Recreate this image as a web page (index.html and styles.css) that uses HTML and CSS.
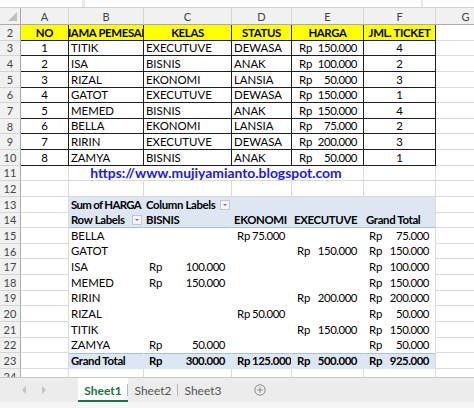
FILE: index.html
```html
<!DOCTYPE html>
<html>
<head>
<meta charset="utf-8">
<link rel="stylesheet" href="styles.css">
</head>
<body>
<div class="topbar"><div class="box b1"></div><div class="box b2"></div><div class="box b3"></div></div>
<div class="sheet">
  <div class="row colhdr">
    <div class="hc corner"><svg width="9" height="9" viewBox="0 0 9 9"><polygon points="9,0 9,9 0,9" fill="#bfbfbf"/></svg></div>
    <div class="hc">A</div><div class="hc">B</div><div class="hc">C</div><div class="hc">D</div><div class="hc">E</div><div class="hc">F</div><div class="hc">G</div>
  </div>
  <div class="row">
    <div class="rh">2</div>
    <div class="c t hd">NO</div><div class="c t hd"><span>NAMA PEMESAN</span></div><div class="c t hd">KELAS</div><div class="c t hd">STATUS</div><div class="c t hd">HARGA</div><div class="c t hd">JML. TICKET</div><div class="c"></div>
  </div>
  <div class="row">
    <div class="rh">3</div>
    <div class="c t ct">1</div><div class="c t">TITIK</div><div class="c t">EXECUTUVE</div><div class="c t">DEWASA</div><div class="c t acc"><span>Rp</span><span>150.000</span></div><div class="c t ct">4</div><div class="c"></div>
  </div>
  <div class="row">
    <div class="rh">4</div>
    <div class="c t ct">2</div><div class="c t">ISA</div><div class="c t">BISNIS</div><div class="c t">ANAK</div><div class="c t acc"><span>Rp</span><span>100.000</span></div><div class="c t ct">2</div><div class="c"></div>
  </div>
  <div class="row">
    <div class="rh">5</div>
    <div class="c t ct">3</div><div class="c t">RIZAL</div><div class="c t">EKONOMI</div><div class="c t">LANSIA</div><div class="c t acc"><span>Rp</span><span>50.000</span></div><div class="c t ct">3</div><div class="c"></div>
  </div>
  <div class="row">
    <div class="rh">6</div>
    <div class="c t ct">4</div><div class="c t">GATOT</div><div class="c t">EXECUTUVE</div><div class="c t">DEWASA</div><div class="c t acc"><span>Rp</span><span>150.000</span></div><div class="c t ct">1</div><div class="c"></div>
  </div>
  <div class="row">
    <div class="rh">7</div>
    <div class="c t ct">5</div><div class="c t">MEMED</div><div class="c t">BISNIS</div><div class="c t">ANAK</div><div class="c t acc"><span>Rp</span><span>150.000</span></div><div class="c t ct">4</div><div class="c"></div>
  </div>
  <div class="row">
    <div class="rh">8</div>
    <div class="c t ct">6</div><div class="c t">BELLA</div><div class="c t">EKONOMI</div><div class="c t">LANSIA</div><div class="c t acc"><span>Rp</span><span>75.000</span></div><div class="c t ct">2</div><div class="c"></div>
  </div>
  <div class="row">
    <div class="rh">9</div>
    <div class="c t ct">7</div><div class="c t">RIRIN</div><div class="c t">EXECUTUVE</div><div class="c t">DEWASA</div><div class="c t acc"><span>Rp</span><span>200.000</span></div><div class="c t ct">3</div><div class="c"></div>
  </div>
  <div class="row">
    <div class="rh">10</div>
    <div class="c t ct">8</div><div class="c t">ZAMYA</div><div class="c t">BISNIS</div><div class="c t">ANAK</div><div class="c t acc"><span>Rp</span><span>50.000</span></div><div class="c t ct">1</div><div class="c"></div>
  </div>
  <div class="row">
    <div class="rh">11</div>
    <div class="c"></div><div class="c link span4">https://www.mujiyamianto.blogspot.com</div><div class="c"></div><div class="c"></div>
  </div>
  <div class="row">
    <div class="rh">12</div>
    <div class="c"></div><div class="c"></div><div class="c"></div><div class="c"></div><div class="c"></div><div class="c"></div><div class="c"></div>
  </div>
  <div class="row">
    <div class="rh">13</div>
    <div class="c"></div><div class="c p ph b sq">Sum of HARGA</div><div class="c p ph b dd">Column Labels<span class="btn"></span></div><div class="c p ph"></div><div class="c p ph"></div><div class="c p ph pl"></div><div class="c"></div>
  </div>
  <div class="row">
    <div class="rh">14</div>
    <div class="c"></div><div class="c p ph ph2 b dd">Row Labels<span class="btn"></span></div><div class="c p ph ph2 b">BISNIS</div><div class="c p ph ph2 b">EKONOMI</div><div class="c p ph ph2 b">EXECUTUVE</div><div class="c p ph ph2 pl b">Grand Total</div><div class="c"></div>
  </div>
  <div class="row">
    <div class="rh">15</div>
    <div class="c"></div><div class="c p">BELLA</div><div class="c p"></div><div class="c p acc pa"><span>Rp</span><span>75.000</span></div><div class="c p"></div><div class="c p pl acc pa"><span>Rp</span><span>75.000</span></div><div class="c"></div>
  </div>
  <div class="row">
    <div class="rh">16</div>
    <div class="c"></div><div class="c p">GATOT</div><div class="c p"></div><div class="c p"></div><div class="c p acc pa"><span>Rp</span><span>150.000</span></div><div class="c p pl acc pa"><span>Rp</span><span>150.000</span></div><div class="c"></div>
  </div>
  <div class="row">
    <div class="rh">17</div>
    <div class="c"></div><div class="c p">ISA</div><div class="c p acc pa"><span>Rp</span><span>100.000</span></div><div class="c p"></div><div class="c p"></div><div class="c p pl acc pa"><span>Rp</span><span>100.000</span></div><div class="c"></div>
  </div>
  <div class="row">
    <div class="rh">18</div>
    <div class="c"></div><div class="c p">MEMED</div><div class="c p acc pa"><span>Rp</span><span>150.000</span></div><div class="c p"></div><div class="c p"></div><div class="c p pl acc pa"><span>Rp</span><span>150.000</span></div><div class="c"></div>
  </div>
  <div class="row">
    <div class="rh">19</div>
    <div class="c"></div><div class="c p">RIRIN</div><div class="c p"></div><div class="c p"></div><div class="c p acc pa"><span>Rp</span><span>200.000</span></div><div class="c p pl acc pa"><span>Rp</span><span>200.000</span></div><div class="c"></div>
  </div>
  <div class="row">
    <div class="rh">20</div>
    <div class="c"></div><div class="c p">RIZAL</div><div class="c p"></div><div class="c p acc pa"><span>Rp</span><span>50.000</span></div><div class="c p"></div><div class="c p pl acc pa"><span>Rp</span><span>50.000</span></div><div class="c"></div>
  </div>
  <div class="row">
    <div class="rh">21</div>
    <div class="c"></div><div class="c p">TITIK</div><div class="c p"></div><div class="c p"></div><div class="c p acc pa"><span>Rp</span><span>150.000</span></div><div class="c p pl acc pa"><span>Rp</span><span>150.000</span></div><div class="c"></div>
  </div>
  <div class="row">
    <div class="rh">22</div>
    <div class="c"></div><div class="c p">ZAMYA</div><div class="c p acc pa"><span>Rp</span><span>50.000</span></div><div class="c p"></div><div class="c p"></div><div class="c p pl acc pa"><span>Rp</span><span>50.000</span></div><div class="c"></div>
  </div>
  <div class="row">
    <div class="rh">23</div>
    <div class="c"></div><div class="c p gt b">Grand Total</div><div class="c p gt b acc pa"><span>Rp</span><span>300.000</span></div><div class="c p gt b acc pa tight"><span>Rp</span><span>125.000</span></div><div class="c p gt b acc pa"><span>Rp</span><span>500.000</span></div><div class="c p gt pl b acc pa"><span>Rp</span><span>925.000</span></div><div class="c"></div>
  </div>
  <div class="row">
    <div class="rh">24</div>
    <div class="c"></div><div class="c"></div><div class="c"></div><div class="c"></div><div class="c"></div><div class="c"></div><div class="c"></div>
  </div>
</div>
<div class="tabbar">
  <div class="nav">
    <svg width="6" height="8" viewBox="0 0 6 8"><polygon points="5,0 5,8 1,4" fill="#c4c4c4"/></svg>
    <svg width="6" height="8" viewBox="0 0 6 8"><polygon points="1,0 1,8 5,4" fill="#c4c4c4"/></svg>
  </div>
  <div class="tab active">Sheet1</div>
  <div class="tab">Sheet2</div>
  <div class="tab">Sheet3</div>
  <div class="add"><svg width="12" height="12" viewBox="0 0 12 12"><circle cx="6" cy="6" r="5.2" fill="none" stroke="#8a8a8a" stroke-width="1"/><path d="M6 3.2v5.6M3.2 6h5.6" stroke="#8a8a8a" stroke-width="1"/></svg></div>
</div>
<div class="status"></div>
</body>
</html>
```
FILE: styles.css
```css
html, body {
  margin: 0;
  padding: 0;
}
body {
  width: 474px;
  height: 408px;
  overflow: hidden;
  background: #ffffff;
  font-family: Lato, "Liberation Sans", sans-serif;
  font-size: 11.4px;
  color: #000;
}
.topbar {
  height: 8px;
  box-sizing: border-box;
  display: flex;
  background: #e9e9e9;
  border-bottom: 1px solid #d0d0d0;
}
.box {
  background: #fff;
  height: 7px;
}
.b1 { width: 82px; }
.b2 { width: 336px; margin-left: 3px; }
.b3 { flex: 1; margin-left: 2px; }
.sheet {
  height: 369px;
  overflow: hidden;
}
.row {
  display: grid;
  grid-template-columns: 21px 48px 75px 88px 60px 72px 72px 60px;
  height: 15.64px;
}
.colhdr {
  height: 17px;
  background: #f1f1f1;
}
.hc {
  box-sizing: border-box;
  border-right: 1px solid #d4d4d4;
  border-bottom: 1px solid #ababab;
  display: flex;
  align-items: center;
  justify-content: center;
  color: #444;
  font-size: 11px;
}
.corner {
  align-items: flex-end;
  justify-content: flex-end;
  padding: 0 3px 3px 0;
  border-right-color: #ababab;
}
.rh {
  box-sizing: border-box;
  background: #f1f1f1;
  border-right: 1px solid #ababab;
  border-bottom: 1px solid #d4d4d4;
  display: flex;
  align-items: center;
  justify-content: center;
  color: #444;
  font-size: 11px;
}
.c {
  box-sizing: border-box;
  border-right: 1px solid #dadada;
  border-bottom: 1px solid #dadada;
  display: flex;
  align-items: flex-end;
  padding: 0 2px 1px 2px;
  overflow: hidden;
  white-space: nowrap;
  line-height: 13px;
}
.t {
  border-right-color: #1e1e1e;
  border-bottom-color: #1e1e1e;
}
.hd {
  background: #ffff00;
  font-weight: bold;
  justify-content: center;
  letter-spacing: -0.35px;
}
.hd span {
  flex: none;
}
.ct {
  justify-content: center;
}
.acc {
  justify-content: space-between;
  padding-left: 7px;
  padding-right: 6px;
}
.acc span:last-child {
  letter-spacing: -0.45px;
}
.pa {
  padding-left: 5px;
}
.tight {
  justify-content: flex-start;
  gap: 2px;
}
.span4 {
  grid-column: span 4;
  justify-content: center;
}
.link {
  color: #1a1ae6;
  font-weight: bold;
  font-size: 13.9px;
  line-height: 14px;
  padding-bottom: 0;
}
.p {
  border-right-color: transparent;
  border-bottom-color: transparent;
}
.pl {
  border-right-color: #dadada;
}
.ph {
  background: #dde7f3;
}
.ph2 {
  border-bottom-color: #9dc3e6;
}
.b {
  font-weight: bold;
  letter-spacing: -0.35px;
}
.b.sq {
  letter-spacing: -0.65px;
}
.dd {
  position: relative;
}
.btn {
  position: absolute;
  right: 1px;
  bottom: 2px;
  width: 10px;
  height: 10px;
  box-sizing: border-box;
  border: 1px solid #c6c6c6;
  background: #f4f4f4;
}
.btn::after {
  content: "";
  position: absolute;
  left: 2px;
  top: 3px;
  border-left: 2px solid transparent;
  border-right: 2px solid transparent;
  border-top: 2px solid #777;
}
.gt {
  background: #dde7f3;
  box-shadow: inset 0 1px 0 #9dc3e6;
}
.tabbar {
  height: 25px;
  box-sizing: border-box;
  background: #ececec;
  border-top: 1px solid #c6c6c6;
  display: flex;
  align-items: stretch;
  font-size: 12px;
}
.nav {
  width: 78px;
  display: flex;
  align-items: center;
  gap: 14px;
  padding-left: 21px;
  box-sizing: border-box;
}
.tab {
  width: 50px;
  display: flex;
  align-items: center;
  justify-content: center;
  color: #555;
  position: relative;
}
.tab + .tab::before {
  content: "";
  position: absolute;
  left: -1px;
  top: 6px;
  bottom: 6px;
  border-left: 1px solid #b8b8b8;
}
.tab:last-of-type::after {
  content: "";
  position: absolute;
  right: 0;
  top: 6px;
  bottom: 6px;
  border-left: 1px solid #b8b8b8;
}
.tab.active {
  background: #fff;
  color: #217346;
  font-weight: bold;
  box-shadow: inset 0 -2px 0 #217346;
}
.add {
  display: flex;
  align-items: center;
  padding-left: 26px;
}
.status {
  height: 6px;
  background: #f6f6f6;
}
```
